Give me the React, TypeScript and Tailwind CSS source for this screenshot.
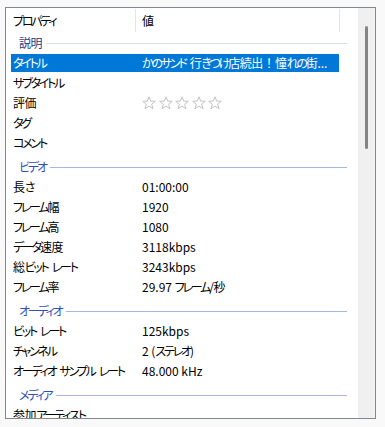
import React from "react";

const font = { fontFamily: '"Noto Sans CJK JP", "Noto Sans", sans-serif' };

function J({ text }: { text: string }) {
  const parts = text.match(/[\u3040-\u30ff]+| +|[^\u3040-\u30ff ]+/g) ?? [];
  return (
    <>
      {parts.map((p, i) =>
        /[\u3040-\u30ff]/.test(p) ? (
          <span key={i} className="tracking-[-2.2px]">{p}</span>
        ) : /^ +$/.test(p) ? (
          <span key={i} className="inline-block w-[4px]"> </span>
        ) : /[\u4e00-\u9fff]/.test(p) ? (
          <span key={i} className="tracking-[-0.4px]">{p}</span>
        ) : (
          <span key={i}>{p}</span>
        )
      )}
    </>
  );
}

function Star() {
  return (
    <svg width="14" height="14" viewBox="0 0 14 14" className="shrink-0">
      <polygon
        points="7,0.8 8.7,5.1 13.3,5.3 9.7,8.2 11,12.7 7,10.1 3,12.7 4.3,8.2 0.7,5.3 5.3,5.1"
        fill="#ffffff"
        stroke="#c3c3c3"
        strokeWidth="1"
        strokeLinejoin="round"
      />
    </svg>
  );
}

function Row({ label, selected, children }: { label: string; selected?: boolean; children?: React.ReactNode }) {
  return (
    <div className="h-[20px] py-[1px] pl-[5px]">
      <div className={"flex h-[18px] w-[328px] items-center " + (selected ? "bg-[#0078d7] text-white" : "text-black")}>
        <div className="w-[131px] shrink-0 whitespace-pre pl-[2px] leading-[18px]">
          <J text={label} />
        </div>
        <div className="flex w-[197px] shrink-0 items-center gap-[2.5px] overflow-hidden whitespace-pre leading-[18px]">
          {children}
        </div>
      </div>
    </div>
  );
}

function Group({ title, first }: { title: string; first?: boolean }) {
  return (
    <div className={"flex h-[20px] items-center gap-[4px] pl-[13px] pr-[11px] " + (first ? "" : "mt-[4px]")}>
      <span className={"whitespace-nowrap leading-[20px] " + (first ? "text-[#1f3a80]" : "text-[#2f4fb8]")}>
        <J text={title} />
      </span>
      <div className={"h-px flex-1 " + (first ? "bg-[#d6e0ea]" : "bg-[#a9b8e2]")} />
    </div>
  );
}

export default function App() {
  return (
    <div className="h-[427px] w-[385px] bg-[#f9f9f9] pl-[5px] pt-[7px] text-[12px] [font-feature-settings:'palt']" style={font}>
      <div className="flex h-[412px] w-[371px] overflow-hidden border border-[#828790] bg-white">
        <div className="flex w-[352px] shrink-0 flex-col overflow-hidden">
          <div className="flex h-[25px] shrink-0 py-[1px] pl-[5px]">
            <div className="w-[125px] border-r border-[#e5e5e5] pl-[2px] leading-[23px] text-black">
              <J text="プロパティ" />
            </div>
            <div className="w-[204px] border-r border-[#e5e5e5] pl-[6px] leading-[23px] text-black">値</div>
          </div>
          <Group title="説明" first />
          <Row label="タイトル" selected>
            <span>
              <J text="かのサンド 行きつけ店続出" />
              <span className="[font-feature-settings:normal]">！</span>
              <J text="憧れの街" />
              ...
            </span>
          </Row>
          <Row label="サブタイトル" />
          <Row label="評価">
            <Star />
            <Star />
            <Star />
            <Star />
            <Star />
          </Row>
          <Row label="タグ" />
          <Row label="コメント" />
          <Group title="ビデオ" />
          <Row label="長さ">01:00:00</Row>
          <Row label="フレーム幅">1920</Row>
          <Row label="フレーム高">1080</Row>
          <Row label="データ速度">3118kbps</Row>
          <Row label="総ビット レート">3243kbps</Row>
          <Row label="フレーム率">
            <span>
              29.97 <J text="フレーム/秒" />
            </span>
          </Row>
          <Group title="オーディオ" />
          <Row label="ビット レート">125kbps</Row>
          <Row label="チャンネル">
            <span>
              2 (<J text="ステレオ" />)
            </span>
          </Row>
          <Row label="オーディオ サンプル レート">48.000 kHz</Row>
          <Group title="メディア" />
          <Row label="参加アーティスト" />
        </div>
        <div className="w-[17px] shrink-0 bg-[#f0f0f0] pl-[7px] pt-[18px]">
          <div className="h-[123px] w-[3px] rounded-full bg-[#858585]" />
        </div>
      </div>
    </div>
  );
}
